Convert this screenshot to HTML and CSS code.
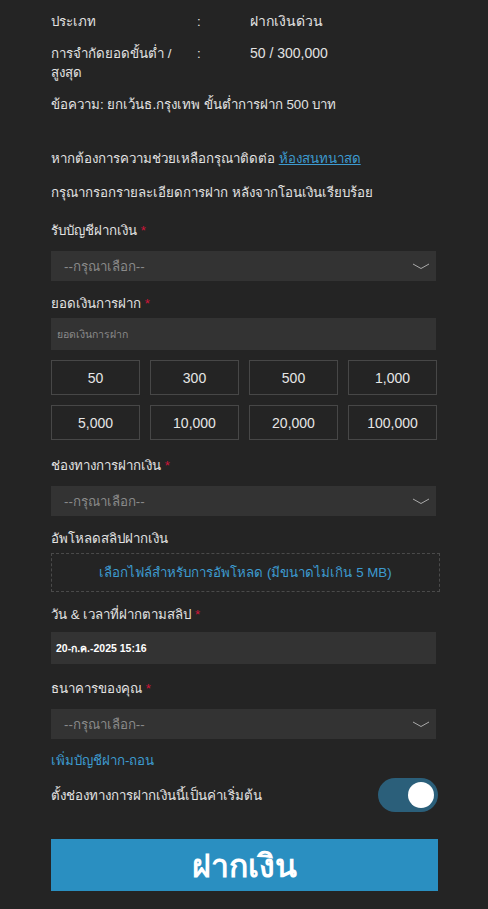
FILE: index.html
```html
<!DOCTYPE html>
<html lang="th">
<head>
    <meta charset="UTF-8">
    <meta name="viewport" content="width=device-width, initial-scale=1.0">
    <title>ฝากเงิน</title>
    <link rel="stylesheet" href="styles.css">
</head>
<body>
  <div class="deposit">
    <!-- info -->
    <div class="info-row">
      <div class="info-key">ประเภท</div>
      <div class="info-colon">:</div>
      <div class="info-val">ฝากเงินด่วน</div>
    </div>
    <div class="info-row">
      <div class="info-key">การจำกัดยอดขั้นต่ำ / สูงสุด</div>
      <div class="info-colon">:</div>
      <div class="info-val">50 / 300,000</div>
    </div>
    <p class="note">ข้อความ: ยกเว้นธ.กรุงเทพ ขั้นต่ำการฝาก 500 บาท</p>

    <p class="help">หากต้องการความช่วยเหลือกรุณาติดต่อ <a href="#" class="chat-link">ห้องสนทนาสด</a></p>
    <p class="help">กรุณากรอกรายละเอียดการฝาก หลังจากโอนเงินเรียบร้อย</p>

    <form class="form">
      <label class="label first">รับบัญชีฝากเงิน <span class="req">*</span></label>
      <div class="select">
        <span>--กรุณาเลือก--</span>
        <svg class="chev" width="18" height="7" viewBox="0 0 18 7"><path d="M1 1 L9 5.5 L17 1" fill="none" stroke="#aaa" stroke-width="1"/></svg>
      </div>

      <label class="label">ยอดเงินการฝาก <span class="req">*</span></label>
      <input class="text-input" type="text" placeholder="ยอดเงินการฝาก">

      <div class="amounts">
        <button type="button" class="amount">50</button>
        <button type="button" class="amount">300</button>
        <button type="button" class="amount">500</button>
        <button type="button" class="amount">1,000</button>
        <button type="button" class="amount">5,000</button>
        <button type="button" class="amount">10,000</button>
        <button type="button" class="amount">20,000</button>
        <button type="button" class="amount">100,000</button>
      </div>

      <label class="label">ช่องทางการฝากเงิน <span class="req">*</span></label>
      <div class="select">
        <span>--กรุณาเลือก--</span>
        <svg class="chev" width="18" height="7" viewBox="0 0 18 7"><path d="M1 1 L9 5.5 L17 1" fill="none" stroke="#aaa" stroke-width="1"/></svg>
      </div>

      <label class="label">อัพโหลดสลิปฝากเงิน</label>
      <div class="upload">เลือกไฟล์สำหรับการอัพโหลด (มีขนาดไม่เกิน 5 MB)</div>

      <label class="label">วัน &amp; เวลาที่ฝากตามสลิป <span class="req">*</span></label>
      <div class="date-input">20-ก.ค.-2025 15:16</div>

      <label class="label">ธนาคารของคุณ <span class="req">*</span></label>
      <div class="select">
        <span>--กรุณาเลือก--</span>
        <svg class="chev" width="18" height="7" viewBox="0 0 18 7"><path d="M1 1 L9 5.5 L17 1" fill="none" stroke="#aaa" stroke-width="1"/></svg>
      </div>

      <a href="#" class="add-account">เพิ่มบัญชีฝาก-ถอน</a>

      <div class="default-row">
        <span>ตั้งช่องทางการฝากเงินนี้เป็นค่าเริ่มต้น</span>
        <div class="toggle"><div class="knob"></div></div>
      </div>

      <button type="submit" class="submit">ฝากเงิน</button>
    </form>
  </div>
</body>
</html>
```

FILE: styles.css
```css
body {
    font-family: "Liberation Sans", Arial, sans-serif;
    background-color: #242424;
    color: #e2e2e2;
    margin: 0;
    font-size: 13.3px;
}
.deposit {
    width: 387px;
    margin-left: 51px;
    padding-top: 12px;
}
.info-row {
    display: flex;
    line-height: 19px;
    margin-bottom: 13px;
}
.info-key {
    width: 128px;
    padding-right: 18px;
}
.info-colon {
    width: 53px;
}
.info-val {
    font-size: 14px;
}
.note {
    margin: 0 0 35px;
    line-height: 19px;
}
.help {
    margin: 0 0 15px;
    line-height: 19px;
}
.chat-link {
    color: #3d9bd0;
}
.form {
    display: flex;
    flex-direction: column;
}
.label {
    line-height: 19px;
    margin: 13px 0 5px;
}
.label.first {
    margin-top: 4px;
}
.req {
    color: #d0143a;
}
.select {
    margin-top: 6px;
    height: 30px;
    width: 385px;
    background-color: #333;
    display: flex;
    align-items: center;
    justify-content: space-between;
    padding: 0 6px 0 13px;
    box-sizing: border-box;
    color: #8a8a8a;
}
.text-input {
    height: 32px;
    width: 385px;
    box-sizing: border-box;
    background-color: #333;
    border: none;
    padding: 0 6px;
    font-family: inherit;
    font-size: 10.5px;
    color: #ddd;
}
.text-input::placeholder {
    color: #8a8a8a;
}
.amounts {
    display: grid;
    grid-template-columns: repeat(4, 89px);
    column-gap: 10px;
    row-gap: 10px;
    margin: 10px 0 3px;
}
.amount {
    height: 35px;
    background-color: #242424;
    border: 1px solid #474747;
    color: #e6e6e6;
    font-family: inherit;
    font-size: 14px;
}
.upload {
    height: 39px;
    box-sizing: border-box;
    border: 1px dashed #4a4a4a;
    display: flex;
    align-items: center;
    justify-content: center;
    color: #3d9bd0;
    width: 389px;
}
.date-input {
    margin: 3px 0 2px;
    height: 32px;
    width: 385px;
    background-color: #333;
    display: flex;
    align-items: center;
    padding-left: 5px;
    box-sizing: border-box;
    font-size: 10.5px;
    font-weight: bold;
    color: #fff;
}
.add-account {
    color: #3d9bd0;
    text-decoration: none;
    line-height: 19px;
    margin-top: 12px;
}
.default-row {
    display: flex;
    align-items: center;
    justify-content: space-between;
    margin-top: 8px;
}
.toggle {
    width: 60px;
    height: 34px;
    border-radius: 17px;
    background-color: #2b5f7a;
    position: relative;
}
.knob {
    position: absolute;
    right: 4px;
    top: 4px;
    width: 26px;
    height: 26px;
    border-radius: 50%;
    background-color: #fff;
}
.submit {
    margin-top: 27px;
    height: 52px;
    background-color: #2a8fc1;
    border: none;
    color: #fff;
    font-family: inherit;
    font-size: 32px;
    font-weight: bold;
}
```
